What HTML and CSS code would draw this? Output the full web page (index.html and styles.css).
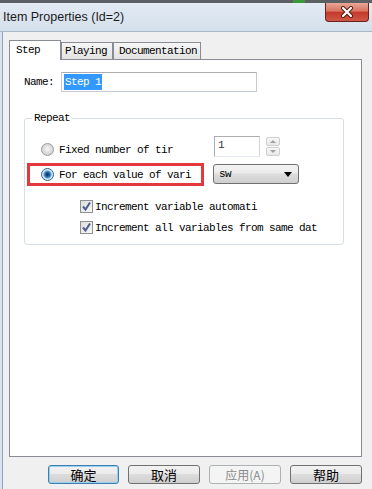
FILE: index.html
```html
<!DOCTYPE html>
<html lang="zh-CN">
<head>
	<meta charset="UTF-8">
	<title>Item Properties</title>
	<link rel="stylesheet" href="styles.css">
</head>
<body>
	<div class="topstrip"><span class="green"></span></div>
	<div class="titlebar">
		<span class="title">Item Properties (Id=2)</span>
		<span class="close">
			<svg width="14" height="12" viewBox="0 0 14 12">
				<path d="M3 2 L11 10 M11 2 L3 10" stroke="#4a1a14" stroke-width="4" stroke-linecap="round"/>
				<path d="M3 2 L11 10 M11 2 L3 10" stroke="#fff" stroke-width="2.2" stroke-linecap="round"/>
			</svg>
		</span>
	</div>
	<div class="client">
		<div class="tabs">
			<span class="tab active">Step</span>
			<span class="tab tab-play">Playing</span>
			<span class="tab tab-doc">Documentation</span>
		</div>
		<div class="panel">
			<div class="name-row">
				<label>Name:</label>
				<span class="textbox"><span class="sel">Step 1</span></span>
			</div>
			<fieldset class="repeat">
				<legend>Repeat</legend>
				<div class="opt-row row-fixed">
					<span class="opt"><i class="radio"></i>Fixed number of tir</span>
					<span class="numbox">1</span>
					<span class="spin">
						<i class="spin-btn"><svg width="6" height="3" viewBox="0 0 6 3"><path d="M0 3 L3 0 L6 3 Z" fill="#a0a0a0"/></svg></i>
						<i class="spin-btn"><svg width="6" height="3" viewBox="0 0 6 3"><path d="M0 0 L3 3 L6 0 Z" fill="#a0a0a0"/></svg></i>
					</span>
				</div>
				<div class="opt-row row-each">
					<span class="opt marked"><i class="radio on"></i>For each value of vari</span>
					<span class="combo">sw<svg class="arrow" width="8" height="5" viewBox="0 0 8 5"><path d="M0 0 L8 0 L4 5 Z" fill="#000"/></svg></span>
				</div>
				<div class="check-row first">
					<i class="check"><svg width="11" height="11" viewBox="0 0 11 11"><path d="M2 5.5 L4.5 8.5 L9 1.5" fill="none" stroke="#4b5f8a" stroke-width="2"/></svg></i>
					<span>Increment variable automati</span>
				</div>
				<div class="check-row">
					<i class="check"><svg width="11" height="11" viewBox="0 0 11 11"><path d="M2 5.5 L4.5 8.5 L9 1.5" fill="none" stroke="#4b5f8a" stroke-width="2"/></svg></i>
					<span>Increment all variables from same dat</span>
				</div>
			</fieldset>
		</div>
		<div class="buttons">
			<span class="btn default">确定</span>
			<span class="btn">取消</span>
			<span class="btn disabled">应用(A)</span>
			<span class="btn">帮助</span>
		</div>
	</div>
</body>
</html>
```

FILE: styles.css
```css
body { margin:0;width:372px;height:489px;overflow:hidden;background:#d9e4ef;font-family:"Liberation Mono","Noto Sans CJK SC",monospace;font-size:11px;letter-spacing:-0.6px;color:#000; }
i { display:block;font-style:normal; }

.topstrip { height:3px;background:#5c5f63;display:flex; }
.topstrip .green { width:12px;height:3px;margin-left:293px;background:#3a9a3a; }

.titlebar { height:28px;display:flex;align-items:flex-start;background:linear-gradient(#e2eaf3,#d5e0ec);border-bottom:1px solid #a9b8c9; }
.title { padding-left:3px;line-height:28px;font-family:"Liberation Sans",sans-serif;font-size:12.5px;letter-spacing:0;color:#1b1b1b; }
.close { margin-left:auto;margin-right:3px;width:44px;height:19px;box-sizing:border-box;border:1px solid #6b2219;border-top:none;border-radius:0 0 4px 4px;background:linear-gradient(#e9a797 0,#d9735f 45%,#c4392a 52%,#cf5747 100%);display:flex;align-items:center;justify-content:center; }

.client { margin-left:2px;height:457px;box-sizing:border-box;border-left:1px solid #8fa3ba;background:#f0f0f0;padding:8px 0 0 6px; }

.tabs { display:flex;align-items:flex-end;height:20px; }
.tab { box-sizing:border-box;border:1px solid #898c95;border-bottom:none;background:linear-gradient(#f6f6f6,#e3e3e3);height:17px;margin-bottom:1px;line-height:16px;padding-left:3px; }
.tab.active { width:52px;height:20px;margin-bottom:0;background:#fff;padding-left:6px;line-height:19px;position:relative;z-index:1; }
.tab-play { width:52px;margin-left:0; }
.tab-doc { width:88px;padding-left:5px; }

.panel { width:353px;height:398px;box-sizing:border-box;margin-top:-1px;border:1px solid #898c95;background:#fff; }

.name-row { display:flex;align-items:center;margin-top:12px;padding-left:14px; }
.name-row label { width:37px; }
.textbox { width:196px;height:20px;box-sizing:border-box;border:1px solid #c5cbd3;border-top-color:#abadb3;padding:1px 0 0 2px; }
.sel { display:inline-block;background:#3399ff;color:#fff;line-height:16px;padding:0 1px; }

.repeat { margin:19px 0 0 14px;width:320px;box-sizing:border-box;padding:0 0 10px 0;border:1px solid #d5dfe5;border-radius:3px;box-shadow:inset 1px 1px 0 #fff; }
.repeat legend { margin-left:7px;padding:0 2px;line-height:14px; }

.opt-row { display:flex;align-items:flex-start;padding-left:2px; }
.row-fixed { margin-top:11px; }
.row-each { margin-top:0; }
.row-fixed .opt { margin-top:2px; }
.opt { width:177px;height:23px;box-sizing:border-box;border:3px solid transparent;padding-left:11px;display:flex;align-items:center; }
.opt.marked { border-color:#e3393c; }
.row-each .opt { margin-top:2px; }

.radio { width:13px;height:13px;box-sizing:border-box;margin-right:5px;border-radius:50%;border:1px solid #9a9a9a;background:radial-gradient(circle at 50% 45%,#f7f7f7 0,#e4e4e4 3px,#d0d0d0 6px); }
.radio.on { border-color:#2f5f8c;background:radial-gradient(circle,#0e2f57 0,#1c5b97 2px,#5e9fd6 3.5px,#cfe3f3 4.5px,#f3f7fa 6px); }

.numbox { margin-left:10px;width:46px;height:21px;box-sizing:border-box;border:1px solid #abadb3;border-right-color:#d2d6dc;border-bottom-color:#e3e9ef;padding:2px 0 0 3px;color:#333; }
.spin { margin:1px 0 0 6px;width:14px;height:19px;display:flex;flex-direction:column;gap:1px; }
.spin-btn { flex:1;box-sizing:border-box;border:1px solid #cfcfcf;border-radius:2px;background:linear-gradient(#f7f7f7,#e8e8e8);display:flex;align-items:center;justify-content:center; }

.combo { margin:3px 0 0 9px;width:86px;height:20px;box-sizing:border-box;border:1px solid #707070;border-radius:3px;background:linear-gradient(#f3f3f3 0,#ebebeb 45%,#dddddd 50%,#cfcfcf 100%);display:flex;align-items:center;padding-left:5px; }
.combo .arrow { margin-left:auto;margin-right:6px; }

.check-row { display:flex;align-items:center;padding-left:55px;height:13px;margin-top:8px; }
.check-row.first { margin-top:14px; }
.check { width:13px;height:13px;box-sizing:border-box;border:1px solid #8e8f8f;background:linear-gradient(135deg,#dcdcdc,#f8f8f8);margin-right:2px;display:flex;align-items:center;justify-content:center; }

.buttons { width:353px;display:flex;justify-content:flex-end;gap:9px;margin-top:8px; }
.btn { width:72px;height:19px;box-sizing:border-box;border:1px solid #707070;border-radius:3px;background:linear-gradient(#f2f2f2 0,#ebebeb 45%,#dddddd 50%,#cfcfcf 100%);font-family:"Noto Sans CJK SC",sans-serif;font-size:13px;letter-spacing:0;line-height:17px;text-align:center; }
.btn.default { width:71px;border-color:#3c7fb1;box-shadow:inset 0 0 0 1px #98d0ee; }
.btn.disabled { border-color:#adb2b5;background:#f4f4f4;color:#8a8a8a;font-size:12px; }
```
